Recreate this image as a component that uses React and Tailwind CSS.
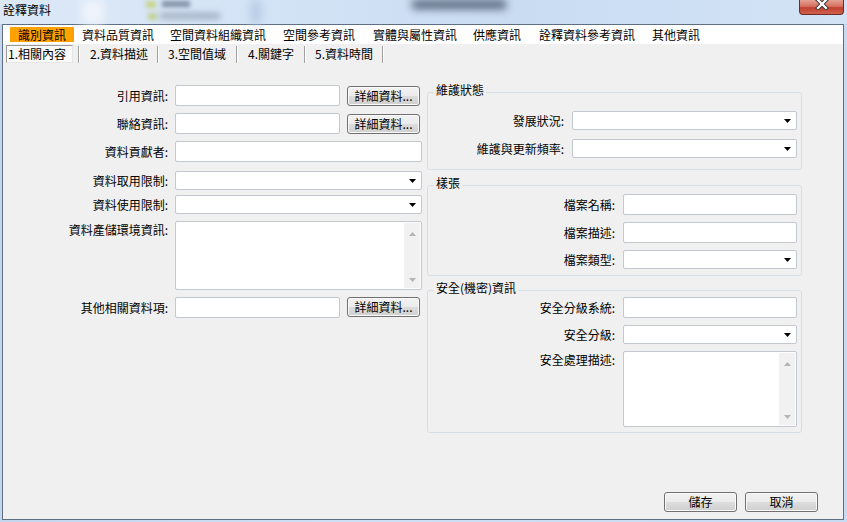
import React from "react";

const box = "bg-white border border-[#c3c8cf] rounded-[2px]";

function Arrow() {
  return (
    <svg width="7" height="4" viewBox="0 0 7 4">
      <path d="M0 0H7L3.5 4Z" fill="#000" />
    </svg>
  );
}

function Input({ className }) {
  return <div className={`${box} h-[21px] shrink-0 ${className}`} />;
}

function Select({ className }) {
  return (
    <div className={`${box} h-[19px] shrink-0 flex items-center justify-end pr-[5px] ${className}`}>
      <Arrow />
    </div>
  );
}

function Memo({ className }) {
  return (
    <div className={`${box} shrink-0 flex justify-end p-[1px] ${className}`}>
      <div className="w-[16px] h-full bg-[#f1f1f1] flex flex-col justify-between items-center pt-[9px] pb-[6px]">
        <svg width="7" height="4" viewBox="0 0 7 4">
          <path d="M0 4H7L3.5 0Z" fill="#b4b4b4" />
        </svg>
        <svg width="7" height="4" viewBox="0 0 7 4">
          <path d="M0 0H7L3.5 4Z" fill="#b4b4b4" />
        </svg>
      </div>
    </div>
  );
}

function Btn({ children, className }) {
  return (
    <div
      className={`h-[20px] w-[73px] shrink-0 rounded-[3px] border border-[#707070] bg-[linear-gradient(#f2f2f2_0%,#ebebeb_50%,#dddddd_50%,#cfcfcf_100%)] shadow-[inset_0_0_0_1px_#fbfbfb] flex items-center justify-center text-[12px] leading-[14px] text-black ${className}`}
    >
      {children}
    </div>
  );
}

function Label({ children, className }) {
  return (
    <div className={`shrink-0 text-right text-[12px] leading-[14px] text-black whitespace-nowrap ${className}`}>
      {children}
    </div>
  );
}

function Group({ title, children, className }) {
  return (
    <fieldset className={`w-[375px] border border-[#d5dfe5] rounded-[3px] ${className}`}>
      <legend className="ml-[6px] px-[2px] text-[12px] leading-[14px] pb-[4px] text-black">{title}</legend>
      {children}
    </fieldset>
  );
}

const menus = [
  ["識別資訊", "w-[64px] bg-[#ffa200]"],
  ["資料品質資訊", "w-[88px]"],
  ["空間資料組織資訊", "w-[113px]"],
  ["空間參考資訊", "w-[90px]"],
  ["實體與屬性資訊", "w-[100px]"],
  ["供應資訊", "w-[66px]"],
  ["詮釋資料參考資訊", "w-[113px]"],
  ["其他資訊", "w-[64px]"],
];

function Sep() {
  return <div className="w-[2px] h-[17px] border-l border-[#a0a0a0] border-r border-r-white shrink-0" />;
}

export default function App() {
  return (
    <div className="w-[847px] h-[522px] overflow-hidden flex flex-col bg-[linear-gradient(90deg,#c3d6ee,#cddff4_40%,#c7dbf2)] font-['Noto_Sans_CJK_TC','Noto_Sans_CJK_SC',sans-serif] text-black">
      {/* title bar */}
      <div className="relative h-[24px] shrink-0 flex items-start justify-between bg-[linear-gradient(90deg,#dce8f6,#d4e4f6_30%,#c9dcf2_60%,#d2e3f5)]">
        <div className="absolute left-[82px] top-0 w-[22px] h-[24px] bg-[#eef4fb] blur-[5px]" />
        <div className="absolute left-[146px] top-[1px] w-[10px] h-[7px] bg-[#c8d48a] blur-[2px]" />
        <div className="absolute left-[162px] top-[1px] w-[28px] h-[6px] bg-[#7f8ea4] blur-[2px]" />
        <div className="absolute left-[148px] top-[13px] w-[9px] h-[7px] bg-[#bfd08f] blur-[2px]" />
        <div className="absolute left-[160px] top-[13px] w-[60px] h-[6px] bg-[#9eacbf] blur-[3px]" />
        <div className="absolute left-[250px] top-0 w-[12px] h-[24px] bg-[#b8cde6] blur-[4px]" />
        <div className="absolute left-[412px] top-[0px] w-[94px] h-[9px] bg-[#56657a] blur-[4px]" />
        <div className="relative ml-[3px] mt-[3px] text-[12px] leading-[14px]">詮釋資料</div>
        <div className="relative mr-[3px] w-[45px] h-[15px] rounded-b-[4px] border border-t-0 border-[#6b2d27] bg-[linear-gradient(#e4a194_0%,#d6705f_45%,#c2412f_55%,#d0604e_100%)] flex items-start justify-center">
          <svg width="14" height="11" viewBox="0 0 14 11" className="mt-[-1px]">
            <path d="M3 1L11 9M11 1L3 9" stroke="#3b3b3b" strokeWidth="4.2" strokeLinecap="square" />
            <path d="M3 1L11 9M11 1L3 9" stroke="#ffffff" strokeWidth="2.2" strokeLinecap="square" />
          </svg>
        </div>
      </div>

      {/* client */}
      <div className="ml-[2px] mr-[3px] mb-[2px] flex-1 border border-[#5f6f83] bg-[#f0f0f0] flex flex-col">
        {/* menu row */}
        <div className="h-[19px] shrink-0 bg-white flex items-center pl-[7px]">
          {menus.map(([m, cls]) => (
            <div key={m} className={`h-[15px] shrink-0 pl-[8px] text-[12px] leading-[15px] whitespace-nowrap ${cls}`}>
              {m}
            </div>
          ))}
        </div>

        {/* sub tab row */}
        <div className="h-[20px] shrink-0 flex items-center pl-[3px] text-[12px] leading-[14px]">
          <div className="h-[18px] w-[67px] border border-[#9a9a9a] border-r-[#e6e6e6] border-b-[#e6e6e6] bg-[#f9f9f9] pl-[1px] flex items-center whitespace-nowrap">
            1.相關內容
          </div>
          <div className="ml-[5px]" />
          <Sep />
          <div className="w-[77px] pl-[10px] whitespace-nowrap">2.資料描述</div>
          <Sep />
          <div className="w-[77px] pl-[9px] whitespace-nowrap">3.空間值域</div>
          <Sep />
          <div className="w-[66px] pl-[10px] whitespace-nowrap">4.關鍵字</div>
          <Sep />
          <div className="w-[76px] pl-[9px] whitespace-nowrap">5.資料時間</div>
          <Sep />
        </div>

        {/* body */}
        <div className="flex items-start">
          {/* left column */}
          <div className="w-[419px] shrink-0 flex flex-col">
            <div className="mt-[21px] flex items-center">
              <Label className="w-[165px]">引用資訊:</Label>
              <Input className="ml-[7px] w-[165px]" />
              <Btn className="ml-[7px]">詳細資料...</Btn>
            </div>
            <div className="mt-[7px] flex items-center">
              <Label className="w-[165px]">聯絡資訊:</Label>
              <Input className="ml-[7px] w-[165px]" />
              <Btn className="ml-[7px]">詳細資料...</Btn>
            </div>
            <div className="mt-[7px] flex items-center">
              <Label className="w-[165px]">資料貢獻者:</Label>
              <Input className="ml-[7px] w-[247px]" />
            </div>
            <div className="mt-[9px] flex items-center">
              <Label className="w-[165px]">資料取用限制:</Label>
              <Select className="ml-[7px] w-[247px]" />
            </div>
            <div className="mt-[5px] flex items-center">
              <Label className="w-[165px]">資料使用限制:</Label>
              <Select className="ml-[7px] w-[247px]" />
            </div>
            <div className="mt-[7px] flex items-start">
              <Label className="w-[165px] pt-[2px]">資料產儲環境資訊:</Label>
              <Memo className="ml-[7px] w-[247px] h-[69px]" />
            </div>
            <div className="mt-[7px] flex items-center">
              <Label className="w-[165px]">其他相關資料項:</Label>
              <Input className="ml-[7px] w-[165px]" />
              <Btn className="ml-[7px] -mt-[2px]">詳細資料...</Btn>
            </div>
          </div>

          {/* right column */}
          <div className="ml-[5px] flex flex-col">
            <Group title="維護狀態" className="mt-[19px] pb-[11px]">
              <div className="mt-[10px] flex items-center">
                <Label className="w-[136px]">發展狀況:</Label>
                <Select className="ml-[8px] w-[225px]" />
              </div>
              <div className="mt-[9px] flex items-center">
                <Label className="w-[136px]">維護與更新頻率:</Label>
                <Select className="ml-[8px] w-[225px]" />
              </div>
            </Group>
            <Group title="樣張" className="mt-[6px] pb-[6px]">
              <div className="mt-[0px] flex items-center">
                <Label className="w-[187px]">檔案名稱:</Label>
                <Input className="ml-[8px] w-[174px]" />
              </div>
              <div className="mt-[7px] flex items-center">
                <Label className="w-[187px]">檔案描述:</Label>
                <Input className="ml-[8px] w-[174px]" />
              </div>
              <div className="mt-[7px] flex items-center">
                <Label className="w-[187px]">檔案類型:</Label>
                <Select className="ml-[8px] w-[174px]" />
              </div>
            </Group>
            <Group title="安全(機密)資訊" className="mt-[5px] pb-[5px]">
              <div className="-mt-[2px] flex items-center">
                <Label className="w-[187px]">安全分級系統:</Label>
                <Input className="ml-[8px] w-[174px]" />
              </div>
              <div className="mt-[7px] flex items-center">
                <Label className="w-[187px]">安全分級:</Label>
                <Select className="ml-[8px] w-[174px]" />
              </div>
              <div className="mt-[7px] flex items-start">
                <Label className="w-[187px] pt-[2px]">安全處理描述:</Label>
                <Memo className="ml-[8px] w-[174px] h-[76px]" />
              </div>
            </Group>
          </div>
        </div>

        {/* footer */}
        <div className="mt-auto flex justify-end gap-[8px] pr-[25px] pb-[7px]">
          <Btn>儲存</Btn>
          <Btn>取消</Btn>
        </div>
      </div>
    </div>
  );
}
